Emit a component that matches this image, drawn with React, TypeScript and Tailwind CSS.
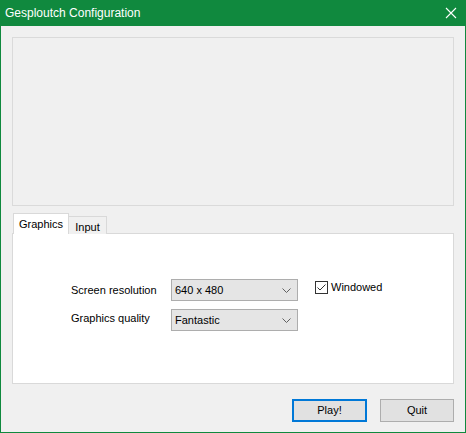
import React, { useState } from "react";

function Chevron() {
	return (
		<svg width="9" height="5" viewBox="0 0 9 5" className="shrink-0">
			<path d="M0.5 0.5 L4.5 4.5 L8.5 0.5" fill="none" stroke="#606060" strokeWidth="1" />
		</svg>
	);
}

function Combo({ value }: { value: string }) {
	return (
		<div className="w-[127px] h-[22px] bg-[#e5e5e5] border border-[#adadad] flex items-center justify-between pl-[3px] pr-[6px]">
			<span>{value}</span>
			<Chevron />
		</div>
	);
}

export default function App() {
	const [tab, setTab] = useState("graphics");

	return (
		<div
			className="w-[466px] h-[433px] bg-[#f0f0f0] border-x border-b border-[#10893e] flex flex-col text-[11px] text-black"
			style={{ fontFamily: '"Liberation Sans", Arial, sans-serif' }}
		>
			{/* title bar */}
			<div className="h-[26px] -mx-px bg-[#10893e] flex items-center justify-between pl-[5px] pr-[9px] text-white">
				<span className="text-[12px]">Gesploutch Configuration</span>
				<svg width="12" height="12" viewBox="0 0 12 12">
					<path d="M1 1 L11 11 M11 1 L1 11" stroke="white" strokeWidth="1.1" />
				</svg>
			</div>

			<div className="flex flex-col px-[11px] pt-[11px]">
				<div className="h-[169px] border border-[#dadada]" />

				{/* tabs */}
				<div className="flex items-end mt-[7px] pl-px h-[21px] relative z-10">
					<button
						onClick={() => setTab("graphics")}
						className="h-[21px] w-[56px] bg-white border border-b-0 border-[#d9d9d9] flex items-start justify-center pt-[2px]"
					>
						Graphics
					</button>
					<button
						onClick={() => setTab("input")}
						className="h-[18px] w-[38px] bg-[#f0f0f0] border border-l-0 border-b-0 border-[#d9d9d9] flex items-start justify-center pt-[2px]"
					>
						Input
					</button>
				</div>
				<div className="h-[151px] -mt-px bg-white border border-[#d9d9d9]">
					{tab === "graphics" && (
						<div className="flex pl-[58px] pt-[45px]">
							<div className="flex flex-col gap-[8px]">
								<div className="flex items-center h-[22px]">
									<span className="w-[100px]">Screen resolution</span>
									<Combo value="640 x 480" />
								</div>
								<div className="flex items-center h-[22px]">
									<span className="w-[100px] -mt-[3px]">Graphics quality</span>
									<Combo value="Fantastic" />
								</div>
							</div>
							<label className="flex items-center h-[16px] ml-[17px] mt-[0px]">
								<span className="w-[13px] h-[13px] border border-[#333] flex items-center justify-center">
									<svg width="11" height="11" viewBox="0 0 11 11">
										<path d="M1.5 5.5 L4 8 L9.5 2.5" fill="none" stroke="#333" strokeWidth="1" />
									</svg>
								</span>
								<span className="ml-[3px]">Windowed</span>
							</label>
						</div>
					)}
				</div>

				<div className="flex justify-end gap-[13px] mt-[15px]">
					<button className="w-[75px] h-[23px] bg-[#e1e1e1] border-2 border-[#0078d7]">Play!</button>
					<button className="w-[74px] h-[23px] bg-[#e1e1e1] border border-[#adadad]">Quit</button>
				</div>
			</div>
		</div>
	);
}
